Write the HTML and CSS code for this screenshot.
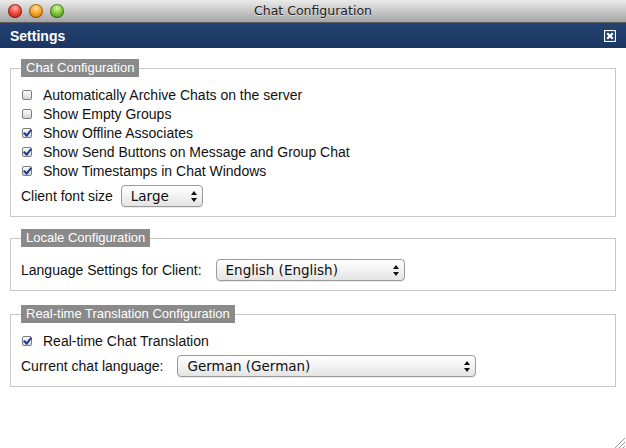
FILE: index.html
```html
<!DOCTYPE html>
<html>
<head>
<meta charset="utf-8">
<link rel="stylesheet" href="styles.css">
</head>
<body>
<div class="window">
  <div class="titlebar">
    <div class="lights">
      <span class="light red"></span>
      <span class="light orange"></span>
      <span class="light green"></span>
    </div>
    <div class="title">Chat Configuration</div>
  </div>
  <div class="header">
    <span class="header-title">Settings</span>
    <span class="close">
      <svg width="12" height="12" viewBox="0 0 12 12">
        <rect x="0.5" y="0.5" width="11" height="11" fill="none" stroke="#fff" stroke-width="1.2"/>
        <path d="M3.2 3.2 L8.8 8.8 M8.8 3.2 L3.2 8.8" stroke="#fff" stroke-width="2.2" stroke-linecap="butt"/>
      </svg>
    </span>
  </div>
  <div class="content">
    <fieldset class="group g1">
      <legend>Chat Configuration</legend>
      <div class="check-row"><span class="cb"></span><span>Automatically Archive Chats on the server</span></div>
      <div class="check-row"><span class="cb"></span><span>Show Empty Groups</span></div>
      <div class="check-row"><span class="cb checked"></span><span>Show Offline Associates</span></div>
      <div class="check-row"><span class="cb checked"></span><span>Show Send Buttons on Message and Group Chat</span></div>
      <div class="check-row"><span class="cb checked"></span><span>Show Timestamps in Chat Windows</span></div>
      <div class="select-row gap-s"><span>Client font size</span><div class="select w-font"><span>Large</span><span class="arrows"></span></div></div>
    </fieldset>
    <fieldset class="group g2">
      <legend>Locale Configuration</legend>
      <div class="select-row gap-l"><span>Language Settings for Client:</span><div class="select w-lang"><span>English (English)</span><span class="arrows"></span></div></div>
    </fieldset>
    <fieldset class="group g3">
      <legend>Real-time Translation Configuration</legend>
      <div class="check-row"><span class="cb checked"></span><span>Real-time Chat Translation</span></div>
      <div class="select-row gap-l"><span>Current chat language:</span><div class="select w-chat"><span>German (German)</span><span class="arrows"></span></div></div>
    </fieldset>
  </div>
  <div class="grip">
    <svg width="12" height="12" viewBox="0 0 12 12">
      <path d="M11 1 L1 11 M11 5 L5 11 M11 9 L9 11" stroke="#999" stroke-width="1"/>
      <path d="M12 2 L2 12 M12 6 L6 12 M12 10 L10 12" stroke="#fff" stroke-width="1"/>
    </svg>
  </div>
</div>
</body>
</html>
```
FILE: styles.css
```css
html, body {
  margin: 0;
  padding: 0;
  background: #fff;
}
.window {
  width: 626px;
  height: 448px;
  position: relative;
  overflow: hidden;
  font-family: "Liberation Sans", Arial, sans-serif;
  font-size: 14px;
  color: #111;
}
.titlebar {
  height: 22px;
  border-bottom: 1px solid #5c5c5c;
  background: linear-gradient(#ebebeb, #c8c8c8 50%, #a4a4a4);
  display: flex;
  align-items: center;
  position: relative;
}
.lights {
  display: flex;
  gap: 7px;
  padding-left: 8px;
}
.light {
  width: 14px;
  height: 14px;
  border-radius: 50%;
  box-shadow: inset 0 0 0 1px rgba(0,0,0,0.35);
}
.red { background: radial-gradient(circle at 50% 30%, #ffb3a8 0, #f0453a 45%, #b0140c 100%); }
.orange { background: radial-gradient(circle at 50% 30%, #ffe2a0 0, #f6a323 45%, #b76608 100%); }
.green { background: radial-gradient(circle at 50% 30%, #d9f7a8 0, #7cc83a 45%, #3d7d14 100%); }
.title {
  position: absolute;
  left: 0;
  right: 0;
  top: 0;
  line-height: 22px;
  text-align: center;
  font-family: "DejaVu Sans", sans-serif;
  font-size: 12.5px;
  color: #222;
  text-shadow: 0 1px 0 rgba(255,255,255,0.5);
}
.header {
  height: 25px;
  background: linear-gradient(#23426f, #1b3662);
  display: flex;
  align-items: center;
  justify-content: space-between;
  padding: 0 10px 0 10px;
}
.header-title {
  color: #fff;
  font-weight: bold;
  font-size: 14px;
}
.close {
  display: flex;
}
.content {
  padding: 11px 10px 0 10px;
  display: flex;
  flex-direction: column;
  gap: 12px;
}
.group {
  margin: 0;
  border: 1px solid #c8c8c8;
  padding: 8px 10px 9px 10px;
  min-width: 0;
}
.g3 { margin-top: 2px; }
.group legend {
  background: #8a8a8a;
  color: #fff;
  padding: 0 5px;
  line-height: 18px;
  height: 18px;
  font-size: 13px;
}
.check-row {
  height: 19px;
  display: flex;
  align-items: center;
  gap: 11px;
  padding-left: 1px;
}
.cb {
  width: 8px;
  height: 8px;
  border: 1px solid #7d7d7d;
  border-radius: 2px;
  background: linear-gradient(#fbfbfb, #d4d4d4);
  position: relative;
  flex: none;
}
.cb.checked::after {
  content: "";
  position: absolute;
  left: 2px;
  top: -1px;
  width: 3px;
  height: 6px;
  border-right: 2px solid #1d3a8a;
  border-bottom: 2px solid #1d3a8a;
  transform: rotate(40deg);
}
.select-row {
  display: flex;
  align-items: center;
  gap: 11px;
  margin-top: 5px;
}
.gap-s { gap: 8px; }
.gap-l { gap: 14px; }
.g2 .select-row { margin-top: 4px; }
.select {
  height: 20px;
  border: 1px solid #9a9a9a;
  border-radius: 4px;
  background: linear-gradient(#ffffff, #f2f2f2 50%, #e4e4e4);
  box-shadow: 0 1px 0 rgba(0,0,0,0.08);
  display: flex;
  align-items: center;
  justify-content: space-between;
  padding: 0 6px 0 9px;
  font-family: "DejaVu Sans", sans-serif;
  font-size: 13.5px;
  color: #111;
  box-sizing: content-box;
}
.w-font { width: 65px; }
.w-lang { width: 172px; }
.w-chat { width: 282px; }
.arrows {
  width: 5px;
  height: 11px;
  position: relative;
}
.arrows::before, .arrows::after {
  content: "";
  position: absolute;
  left: 0;
  border-left: 3px solid transparent;
  border-right: 3px solid transparent;
}
.arrows::before {
  top: 0;
  border-bottom: 4px solid #111;
}
.arrows::after {
  bottom: 0;
  border-top: 4px solid #111;
}
.grip {
  position: absolute;
  right: 0;
  bottom: 0;
  width: 12px;
  height: 12px;
}
```
